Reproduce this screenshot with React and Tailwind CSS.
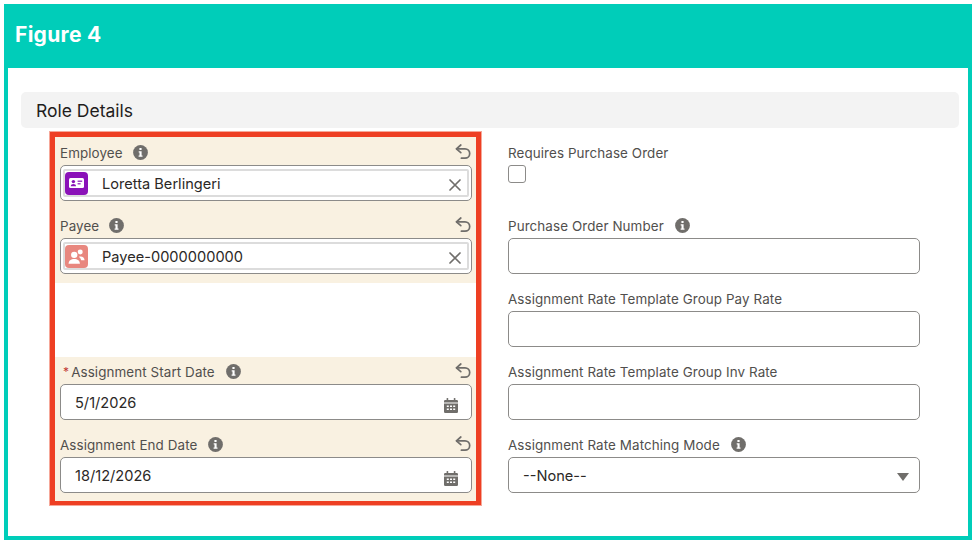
import React from "react";

const FONT = "[font-family:Inter,'Liberation_Sans',sans-serif]";

function Info() {
  return (
    <svg width="15" height="15" viewBox="0 0 15 15" className="shrink-0">
      <circle cx="7.5" cy="7.5" r="7.4" fill="#706e6b" />
      <rect x="6.4" y="3" width="2.2" height="2.1" rx="0.5" fill="#fff" />
      <path d="M5.7 6.3h2.9v4.2h0.9v1.2H5.6v-1.2h0.9v-3H5.7z" fill="#fff" />
    </svg>
  );
}

function Undo() {
  return (
    <svg width="16" height="16" viewBox="0 0 16 16" fill="none" stroke="#706e6b" strokeWidth="1.7" strokeLinecap="round" strokeLinejoin="round" className="shrink-0 -mt-[1px]">
      <path d="M5.8 1 1.4 4.8l4.4 3.8" />
      <path d="M1.7 4.8h8.3a4.7 4.7 0 0 1 0 9.4H6.4" />
    </svg>
  );
}

function Close() {
  return (
    <svg width="14" height="14" viewBox="0 0 14 14" stroke="#706e6b" strokeWidth="1.7" strokeLinecap="round" className="shrink-0 mt-[4px]">
      <path d="M2 2l10 10M12 2 2 12" />
    </svg>
  );
}

function Calendar() {
  return (
    <svg width="14" height="15" viewBox="0 0 14 15" className="shrink-0 mt-[6px]" fill="#706e6b">
      <rect x="2.6" y="0" width="1.6" height="3" rx="0.5" />
      <rect x="9.8" y="0" width="1.6" height="3" rx="0.5" />
      <path d="M0 3.3a1.2 1.2 0 0 1 1.2-1.2h11.6A1.2 1.2 0 0 1 14 3.3v1.2H0z" />
      <path fillRule="evenodd" d="M0 5.5h14v8.3a1.2 1.2 0 0 1-1.2 1.2H1.2A1.2 1.2 0 0 1 0 13.8zM2.8 7.5v1.5h2V7.5zm3.2 0v1.5h2V7.5zm3.2 0v1.5h2V7.5zM2.8 10.5V12h2v-1.5zm3.2 0V12h2v-1.5zm3.2 0V12h2v-1.5z" />
    </svg>
  );
}

function ContactIcon() {
  return (
    <span className="w-[23px] h-[23px] rounded-[4px] bg-[#8a12b8] flex items-center justify-center shrink-0">
      <svg width="15" height="12" viewBox="0 0 15 12">
        <rect x="0" y="1" width="15" height="10" rx="1.5" fill="#fff" />
        <circle cx="4.4" cy="4.6" r="1.7" fill="#8a12b8" />
        <path d="M1.8 9.2c0-1.6 1.2-2.3 2.6-2.3s2.6.7 2.6 2.3z" fill="#8a12b8" />
        <rect x="8.6" y="3.6" width="4.6" height="1.2" fill="#8a12b8" />
        <rect x="8.6" y="6.2" width="3" height="1.2" fill="#8a12b8" />
      </svg>
    </span>
  );
}

function PayeeIcon() {
  return (
    <span className="w-[23px] h-[23px] rounded-[4px] bg-[#e8877f] flex items-center justify-center shrink-0">
      <svg width="17" height="17" viewBox="0 0 15 15" fill="#fff">
        <circle cx="5.5" cy="6" r="2.8" />
        <path d="M0.5 14c0-3 2.2-4.3 5-4.3s5 1.3 5 4.3z" />
        <circle cx="10.8" cy="3.6" r="2.2" />
        <path d="M10 7.6c2.4-.6 4.6.5 4.6 3.2h-3c-.3-1.2-1-2.3-2-2.8z" />
      </svg>
    </span>
  );
}

function Label({ children, required, gap = "ml-[11px]" }) {
  return (
    <div className="flex items-center text-[13.4px] leading-[16px] text-[#514f4d] tracking-[0.1px]">
      {required && <span className="text-[#c23934] ml-[3px] mr-[2px] text-[12px]">*</span>}
      <span>{children}</span>
      <span className={`${gap} flex`}><Info /></span>
    </div>
  );
}

function LookupField({ label, value, icon }) {
  return (
    <div className="h-[73px] pl-[5px] pr-[4px] bg-[#f9f1e1] flex flex-col">
      <div className="h-[28px] flex items-center justify-between pt-[3px] pr-[1px]">
        <Label gap="ml-[10px]">{label}</Label>
        <Undo />
      </div>
      <div className="h-[36px] rounded-[5px] border border-[#8c8b89] bg-white p-[3px]">
        <div className="h-full border-2 border-[#dcdcdc] rounded-[2px] flex items-center pr-[5px] -mx-[1px]">
          {icon}
          <span className="ml-[14px] pt-[3px] text-[14.6px] text-[#2b2826] flex-1">{value}</span>
          <Close />
        </div>
      </div>
    </div>
  );
}

function DateField({ label, value, required, last, first }) {
  return (
    <div className={`${last || first ? "h-[72px]" : "h-[73px]"} pl-[5px] pr-[4px] bg-[#f9f1e1] flex flex-col`}>
      <div className={`${first ? "h-[27px] pt-[2px]" : "h-[28px] pt-[3px]"} flex items-center justify-between pr-[1px]`}>
        <Label required={required}>{label}</Label>
        <Undo />
      </div>
      <div className="h-[36px] rounded-[5px] border border-[#8c8b89] bg-white flex items-center justify-between pl-[14px] pr-[13px]">
        <span className="pt-[3px] text-[14.6px] text-[#2b2826]">{value}</span>
        <Calendar />
      </div>
    </div>
  );
}

function TextField({ label, info }) {
  return (
    <div className="h-[73px] flex flex-col">
      <div className="h-[28px] flex items-center pt-[3px]">
        {info ? <Label>{label}</Label> : <div className="text-[13.4px] leading-[16px] text-[#514f4d] tracking-[0.1px]">{label}</div>}
      </div>
      <div className="h-[36px] rounded-[5px] border border-[#8c8b89] bg-white" />
    </div>
  );
}

export default function App() {
  return (
    <div className={`w-[976px] h-[542px] bg-white p-[4px] pb-[2px] ${FONT}`}>
      <div className="h-full flex flex-col border-x-4 border-b-4 border-[#00cdb9]">
        <div className="h-[64px] -mx-[4px] shrink-0 bg-[#00cdb9] flex items-center pl-[11px] pb-[2px]">
          <h1 className="text-[21px] font-bold text-white tracking-[0.3px]">Figure 4</h1>
        </div>
        <div className="flex-1 bg-white pt-[24px] pl-[13px] pr-[9px]">
          <div className="h-[36px] rounded-[5px] bg-[#f3f3f3] flex items-center pl-[15px] pt-[2px] text-[17.5px] text-[#1f1d1c]">
            Role Details
          </div>
          <div className="mt-[4px] flex">
            <div className="ml-[29px] w-[431px] border-[5px] border-b-4 border-[#ee3f23] shadow-[0_0_0_1px_#f6a899] flex flex-col">
              <LookupField label="Employee" value="Loretta Berlingeri" icon={<ContactIcon />} />
              <LookupField label="Payee" value="Payee-0000000000" icon={<PayeeIcon />} />
              <div className="h-[74px]" />
              <DateField label="Assignment Start Date" value="5/1/2026" required first />
              <DateField label="Assignment End Date" value="18/12/2026" last />
            </div>
            <div className="ml-[27px] w-[412px] pt-[5px] flex flex-col">
              <div className="h-[73px] flex flex-col">
                <div className="h-[28px] flex items-center pt-[3px] text-[13.4px] leading-[16px] text-[#514f4d] tracking-[0.1px]">Requires Purchase Order</div>
                <div className="w-[18px] h-[18px] rounded-[3px] border border-[#8c8b89] bg-white" />
              </div>
              <TextField label="Purchase Order Number" info />
              <TextField label="Assignment Rate Template Group Pay Rate" />
              <TextField label="Assignment Rate Template Group Inv Rate" />
              <div className="h-[73px] flex flex-col">
                <div className="h-[28px] flex items-center pt-[3px]">
                  <Label>Assignment Rate Matching Mode</Label>
                </div>
                <div className="h-[36px] rounded-[5px] border border-[#8c8b89] bg-white flex items-center justify-between pl-[14px] pr-[10px]">
                  <span className="pt-[3px] text-[14.6px] text-[#2b2826]">--None--</span>
                  <svg width="12" height="8" viewBox="0 0 12 8" fill="#706e6b" className="shrink-0 mt-[4px]"><path d="M0 0h12L6 8z" /></svg>
                </div>
              </div>
            </div>
          </div>
        </div>
      </div>
    </div>
  );
}
